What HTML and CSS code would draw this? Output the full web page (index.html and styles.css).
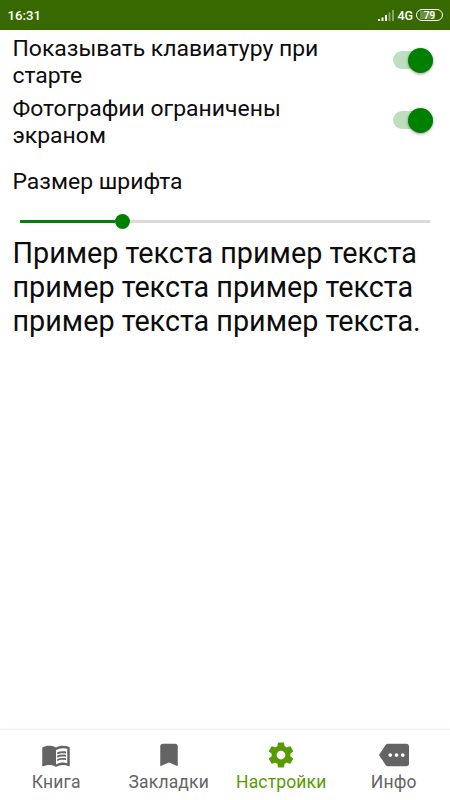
FILE: index.html
```html
<!DOCTYPE html>
<html lang="ru">
<head>
<meta charset="utf-8">
<title>Настройки</title>
<link rel="stylesheet" href="styles.css">
</head>
<body>
<header class="status">
  <span class="time">16:31</span>
  <svg class="signal" width="17" height="12" viewBox="0 0 17 12" fill="#fff"><path d="M0 10h2v2H0zM3.5 8.500h2V12h-2zM7 6h2v6H7z"/><path opacity=".4" d="M10.500 3.500h2V12h-2zM14 1h2v11h-2z"/></svg>
  <span class="net">4G</span>
  <span class="battery">79</span>
</header>
<main>
  <div class="row"><span class="label">Показывать клавиатуру при старте</span><span class="switch"><span class="thumb"></span></span></div>
  <div class="row"><span class="label">Фотографии ограничены экраном</span><span class="switch"><span class="thumb"></span></span></div>
  <div class="heading">Размер шрифта</div>
  <div class="slider"><span class="filled"></span><span class="knob"></span><span class="rest"></span></div>
  <p class="sample">Пример текста пример текста пример текста пример текста пример текста пример текста.</p>
</main>
<nav>
  <a class="tab"><svg viewBox="0 0 24 24"><path d="M21 5c-1.110-.35-2.330-.5-3.500-.5-1.950 0-4.050.4-5.500 1.500-1.450-1.100-3.550-1.500-5.500-1.500S2.450 4.900 1 6v14.650c0 .25.25.5.5.5.1 0 .15-.05.25-.05C3.100 20.450 5.050 20 6.500 20c1.950 0 4.050.4 5.500 1.500 1.350-.85 3.800-1.500 5.500-1.500 1.650 0 3.350.3 4.750 1.050.1.05.15.05.25.05.25 0 .5-.25.5-.5V6c-.6-.45-1.250-.75-2-1zm0 13.500c-1.100-.35-2.300-.5-3.500-.5-1.700 0-4.150.65-5.500 1.500V8c1.350-.85 3.800-1.500 5.500-1.500 1.200 0 2.400.15 3.500.5z"/><path d="M17.500 10.500c.88 0 1.730.09 2.500.26V9.240c-.79-.15-1.640-.24-2.500-.24-1.700 0-3.240.29-4.500.83v1.660c1.130-.64 2.700-.99 4.500-.99zM13 12.490v1.660c1.130-.64 2.700-.99 4.500-.99.88 0 1.730.09 2.500.26V11.900c-.79-.15-1.640-.24-2.500-.24-1.700 0-3.240.3-4.500.83zM17.500 14.330c-1.700 0-3.240.29-4.500.83v1.660c1.130-.64 2.700-.99 4.500-.99.88 0 1.730.09 2.500.26v-1.520c-.79-.16-1.640-.24-2.500-.24z"/></svg><span>Книга</span></a>
  <a class="tab"><svg viewBox="0 0 24 24"><path d="M17 3H7c-1.100 0-2 .9-2 2v16l7-3 7 3V5c0-1.100-.9-2-2-2z"/></svg><span>Закладки</span></a>
  <a class="tab active"><svg viewBox="0 0 24 24"><path d="M19.430 12.980c.04-.32.07-.64.07-.98s-.03-.66-.07-.98l2.110-1.650c.19-.15.24-.42.12-.64l-2-3.460c-.12-.22-.39-.3-.61-.22l-2.490 1c-.52-.4-1.080-.73-1.690-.98l-.38-2.650C14.460 2.180 14.250 2 14 2h-4c-.25 0-.46.18-.49.42l-.38 2.650c-.61.25-1.170.59-1.690.98l-2.490-1c-.23-.09-.49 0-.61.22l-2 3.460c-.13.22-.07.49.12.64l2.110 1.650c-.04.32-.07.65-.07.98s.03.66.07.98l-2.110 1.650c-.19.15-.24.42-.12.64l2 3.460c.12.22.39.3.61.22l2.490-1c.52.4 1.080.73 1.690.98l.38 2.650c.03.24.24.42.49.42h4c.25 0 .46-.18.49-.42l.38-2.650c.61-.25 1.170-.59 1.690-.98l2.490 1c.23.09.49 0 .61-.22l2-3.460c.12-.22.07-.49-.12-.64zM12 15.500c-1.930 0-3.500-1.570-3.500-3.500s1.570-3.500 3.500-3.500 3.500 1.570 3.500 3.500-1.570 3.500-3.500 3.500z"/></svg><span>Настройки</span></a>
  <a class="tab"><svg viewBox="0 0 24 24"><path d="M22 3H7c-.69 0-1.230.35-1.590.88L0 12l5.410 8.110c.36.53.9.89 1.590.89h15c1.100 0 2-.9 2-2V5c0-1.100-.9-2-2-2zM9 13.500c-.83 0-1.500-.67-1.500-1.500s.67-1.500 1.500-1.500 1.500.67 1.500 1.500-.67 1.500-1.500 1.500zm5 0c-.83 0-1.500-.67-1.500-1.500s.67-1.500 1.500-1.500 1.500.67 1.500 1.500-.67 1.500-1.500 1.500zm5 0c-.83 0-1.500-.67-1.500-1.500s.67-1.500 1.500-1.500 1.500.67 1.500 1.500-.67 1.500-1.500 1.500z"/></svg><span>Инфо</span></a>
</nav>
</body>
</html>
```
FILE: styles.css
```css
* { box-sizing: border-box; }
body {
  margin: 0;
  height: 800px;
  display: flex;
  flex-direction: column;
  background: #fff;
  color: #0c0c0c;
  font-family: Roboto, sans-serif;
  overflow: hidden;
}
.status {
  height: 30px;
  flex: none;
  display: flex;
  align-items: center;
  padding: 0 7px 0 7.500px;
  background: #376900;
  color: #fff;
  font-size: 13.200px;
  font-weight: 500;
}
.time { flex: 1; }
.signal { margin-right: 2px; }
.net { margin-right: 3px; font-size: 12.500px; }
.battery {
  width: 27px;
  height: 12px;
  border: 1px solid #fff;
  border-radius: 6px;
  background: linear-gradient(90deg, #6b8f44 80%, #376900 80%) 50% 50% / 19px 8px no-repeat;
  font-size: 10px;
  line-height: 11px;
  text-align: center;
}
main { flex: 1; }
.row {
  height: 60px;
  padding: 6px 17px 0 12.500px;
  display: flex;
  justify-content: space-between;
}
.label, .heading {
  font-size: 22.950px;
  line-height: 27px;
}
.label { width: 345px; line-height: 26.500px; }
.switch {
  width: 40px;
  height: 18px;
  margin-top: 15px;
  border-radius: 9px;
  background: #bddfbd;
  display: flex;
  justify-content: flex-end;
  align-items: center;
}
.thumb {
  flex: none;
  width: 25px;
  height: 25px;
  border-radius: 50%;
  background: #008000;
  box-shadow: 0 1px 3px rgba(0, 0, 0, 0.4);
}
.heading { padding: 18px 12.500px 0; }
.slider {
  height: 21px;
  margin: 16px 20px 0;
  display: flex;
  align-items: center;
}
.filled { width: 95px; height: 3px; background: #078007; }
.knob { width: 15px; height: 15px; border-radius: 50%; background: #008000; }
.rest { flex: 1; height: 3px; background: #dadada; }
.sample {
  margin: 4px 12.500px 0;
  font-size: 28.750px;
  line-height: 34px;
}
nav {
  height: 71px;
  flex: none;
  display: flex;
  border-top: 1px solid #f0f0f0;
  box-shadow: 0 -1px 2px rgba(0, 0, 0, 0.04);
}
.tab {
  flex: 1;
  display: flex;
  flex-direction: column;
  align-items: center;
  padding-top: 10px;
  color: #646464;
  font-size: 17.500px;
  line-height: 24px;
  letter-spacing: 0.150px;
}
.tab svg { flex: none; width: 30px; height: 30px; fill: currentColor; }
.active { color: #579b00; }
```
